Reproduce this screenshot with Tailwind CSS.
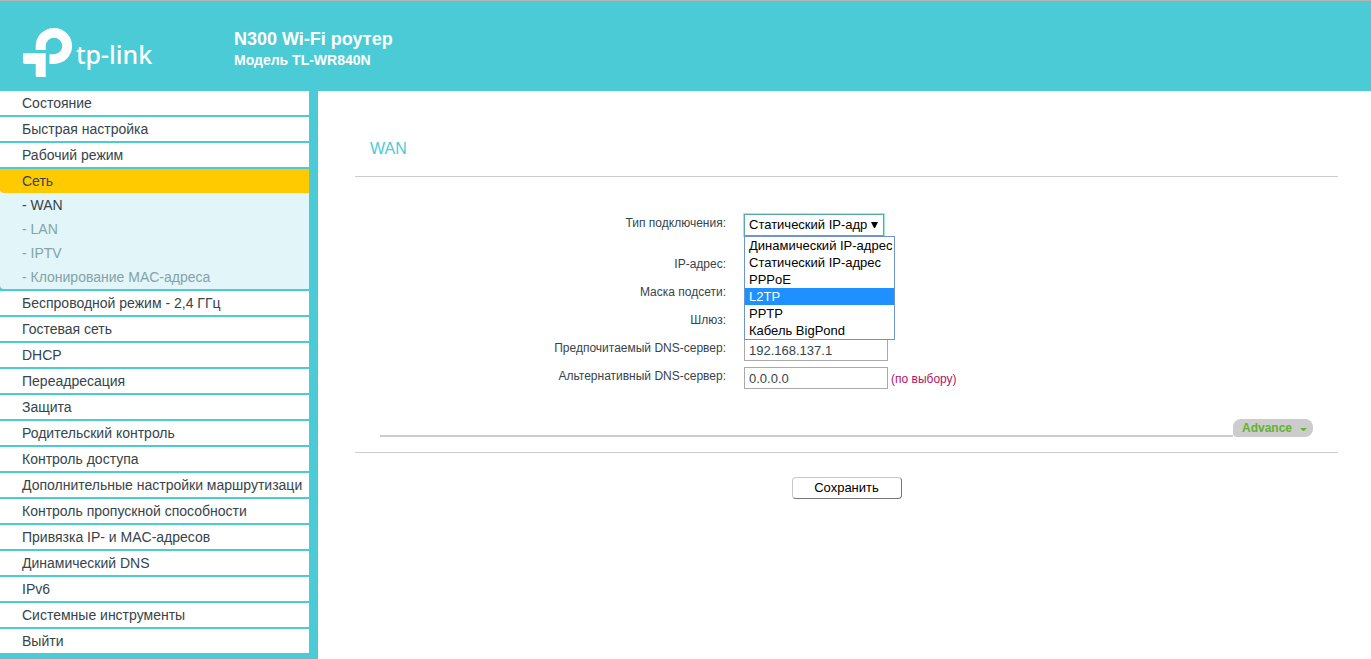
<!DOCTYPE html>
<html lang="ru">
<head>
<meta charset="utf-8">
<meta name="viewport" content="width=device-width, initial-scale=1">
<title>TL-WR840N</title>
<script src="https://cdn.jsdelivr.net/npm/@tailwindcss/browser@4"></script>
</head>
<body class="min-h-screen flex flex-col bg-white text-[#36444b] font-['Liberation_Sans',Arial,sans-serif]">
<header class="flex h-[91px] shrink-0 border-t border-[#b4b4b4] bg-[#4acbd6] text-white">
  <div class="w-[234px] shrink-0 pt-[26px] pl-[22px]">
    <svg class="block" width="140" height="52" viewBox="0 0 140 52" role="img" aria-label="tp-link">
      <path fill="#fff" d="M13.700 23V19A18.200 18 0 1 1 32 37H27.500V27.300H32A8.300 8.300 0 1 0 23.700 19V23Z"/>
      <path fill="#fff" d="M1 26.300H23.700V50H15.200Q13.700 50 13.700 48.500V37H3Q1 37 1 35Z"/>
      <text x="54" y="37" fill="#fff" font-family="Noto Sans, sans-serif" font-size="25" font-weight="500">tp-link</text>
    </svg>
  </div>
  <div class="pt-[27px]">
    <h1 class="text-[18px] leading-[22px] font-bold">N300 Wi-Fi роутер</h1>
    <p class="text-[14px] leading-[20px] font-bold">Модель TL-WR840N</p>
  </div>
</header>
<div class="flex grow">
  <nav class="w-[318px] shrink-0 border-r-[9px] border-[#4acbd6] bg-[#4acbd6] text-[14px] leading-6 whitespace-nowrap">
    <ul class="flex flex-col gap-[2px] pb-[6px]">
      <li><a href="#" class="block bg-white pl-[22px] overflow-hidden">Состояние</a></li>
      <li><a href="#" class="block bg-white pl-[22px] overflow-hidden">Быстрая настройка</a></li>
      <li><a href="#" class="block bg-white pl-[22px] overflow-hidden">Рабочий режим</a></li>
      <li>
        <div class="bg-white"><a href="#" class="block bg-[#ffcb00] pl-[22px] rounded-bl-[4px]">Сеть</a></div>
        <ul class="bg-[#e2f5f8] rounded-bl-[4px] text-[#83a3a8]">
          <li><a href="#" class="block pl-[22px] text-[#36444b]">- WAN</a></li>
          <li><a href="#" class="block pl-[22px]">- LAN</a></li>
          <li><a href="#" class="block pl-[22px]">- IPTV</a></li>
          <li><a href="#" class="block pl-[22px]">- Клонирование MAC-адреса</a></li>
        </ul>
      </li>
      <li><a href="#" class="block bg-white pl-[22px] overflow-hidden">Беспроводной режим - 2,4 ГГц</a></li>
      <li><a href="#" class="block bg-white pl-[22px] overflow-hidden">Гостевая сеть</a></li>
      <li><a href="#" class="block bg-white pl-[22px] overflow-hidden">DHCP</a></li>
      <li><a href="#" class="block bg-white pl-[22px] overflow-hidden">Переадресация</a></li>
      <li><a href="#" class="block bg-white pl-[22px] overflow-hidden">Защита</a></li>
      <li><a href="#" class="block bg-white pl-[22px] overflow-hidden">Родительский контроль</a></li>
      <li><a href="#" class="block bg-white pl-[22px] overflow-hidden">Контроль доступа</a></li>
      <li><a href="#" class="block bg-white pl-[22px] overflow-hidden">Дополнительные настройки маршрутизаци</a></li>
      <li><a href="#" class="block bg-white pl-[22px] overflow-hidden">Контроль пропускной способности</a></li>
      <li><a href="#" class="block bg-white pl-[22px] overflow-hidden">Привязка IP- и MAC-адресов</a></li>
      <li><a href="#" class="block bg-white pl-[22px] overflow-hidden">Динамический DNS</a></li>
      <li><a href="#" class="block bg-white pl-[22px] overflow-hidden">IPv6</a></li>
      <li><a href="#" class="block bg-white pl-[22px] overflow-hidden">Системные инструменты</a></li>
      <li><a href="#" class="block bg-white pl-[22px] overflow-hidden">Выйти</a></li>
    </ul>
  </nav>
  <main class="grow min-w-0 pt-[46px] pl-[37px] pr-[33px]">
    <h2 class="pl-[15px] text-[16px] leading-6 text-[#4acbd6]">WAN</h2>
    <form class="mt-[15px] border-t border-[#cccccc] pt-[37px] text-[12px]">
      <div class="flex gap-[18px] mb-[19px]">
        <label for="type" class="w-[371px] text-right leading-[18px]">Тип подключения:</label>
        <div class="relative text-[13px] text-black">
          <select id="type" class="block appearance-none w-[140px] h-[22px] border border-[#5aa9a8] bg-white pl-1 pr-4 text-[13px] leading-5 outline outline-[#a5e5ea]">
            <option>Статический IP-адр</option>
          </select>
          <svg class="absolute left-[127px] top-2" width="7" height="6" viewBox="0 0 7 6" aria-hidden="true"><path d="M0 0H7L4 6H3Z"/></svg>
          <ul class="absolute left-0 top-[22px] z-10 w-[151px] border border-[#6d94cf] bg-white leading-[17px] whitespace-nowrap" role="listbox" aria-label="Тип подключения">
            <li role="option" class="pl-1">Динамический IP-адрес</li>
            <li role="option" class="pl-1">Статический IP-адрес</li>
            <li role="option" class="pl-1">PPPoE</li>
            <li role="option" aria-selected="true" class="pl-1 bg-[#1e90ff] text-white">L2TP</li>
            <li role="option" class="pl-1">PPTP</li>
            <li role="option" class="pl-1">Кабель BigPond</li>
          </ul>
        </div>
      </div>
      <div class="flex flex-col gap-[6px]">
        <div class="flex gap-[18px]">
          <label for="ip" class="w-[371px] text-right leading-[18px]">IP-адрес:</label>
          <input id="ip" type="text" class="w-36 h-[22px] border border-[#a9a9a9] pl-1 text-[13px]">
        </div>
        <div class="flex gap-[18px]">
          <label for="mask" class="w-[371px] text-right leading-[18px]">Маска подсети:</label>
          <input id="mask" type="text" class="w-36 h-[22px] border border-[#a9a9a9] pl-1 text-[13px]">
        </div>
        <div class="flex gap-[18px]">
          <label for="gw" class="w-[371px] text-right leading-[18px]">Шлюз:</label>
          <input id="gw" type="text" class="w-36 h-[22px] border border-[#a9a9a9] pl-1 text-[13px]">
        </div>
        <div class="flex gap-[18px]">
          <label for="dns1" class="w-[371px] text-right leading-[18px]">Предпочитаемый DNS-сервер:</label>
          <input id="dns1" type="text" value="192.168.137.1" class="w-36 h-[22px] border border-[#a9a9a9] pl-1 text-[13px]">
        </div>
        <div class="flex gap-[18px]">
          <label for="dns2" class="w-[371px] text-right leading-[18px]">Альтернативный DNS-сервер:</label>
          <div class="flex gap-[3px]">
            <input id="dns2" type="text" value="0.0.0.0" class="w-36 h-[22px] border border-[#a9a9a9] pl-1 text-[13px]">
            <span class="leading-6 text-[#b5126a]">(по выбору)</span>
          </div>
        </div>
      </div>
      <div class="mt-7 mx-[25px] flex items-end">
        <div class="grow h-[2px] bg-[#cccccc]"></div>
        <button type="button" class="flex items-center justify-between w-20 h-[18px] shrink-0 rounded-lg rounded-bl-sm bg-[#cccccc] pl-[9px] pr-[6px] text-[12px] leading-[18px] font-bold text-[#62b32e]">Advance
          <svg class="mt-[3px]" width="7" height="3" viewBox="0 0 7 3" aria-hidden="true"><path fill="#62b32e" d="M0 0H7L4 3H3Z"/></svg>
        </button>
      </div>
      <div class="mt-[15px] border-t border-[#cccccc] pt-6 flex justify-center">
        <button type="submit" class="w-[110px] h-[22px] rounded-[4px] border border-t-[#c8c8c8] border-l-[#c8c8c8] border-r-[#777777] border-b-[#777777] bg-white text-[13px] leading-5 text-black">Сохранить</button>
      </div>
    </form>
  </main>
</div>
</body>
</html>
